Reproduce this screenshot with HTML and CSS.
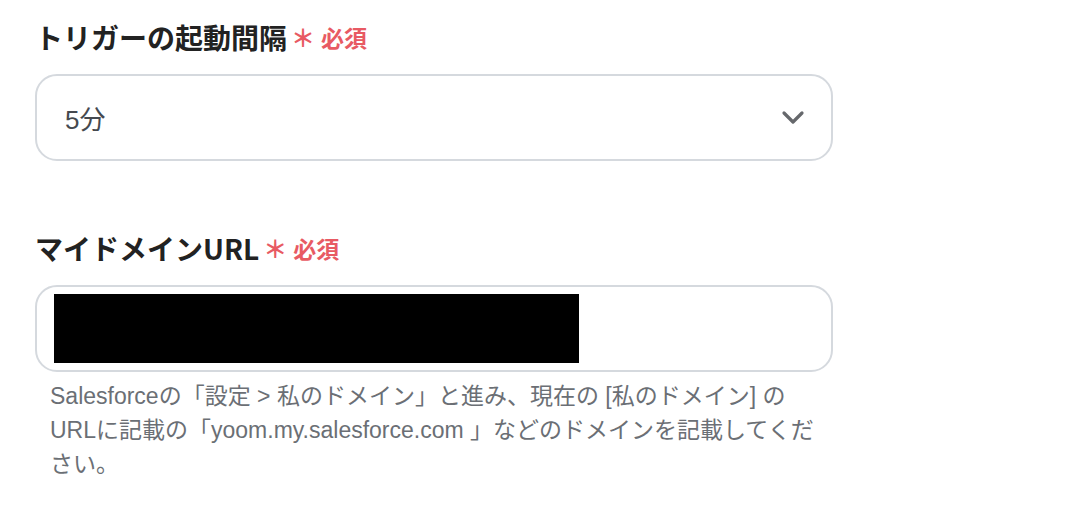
FILE: index.html
```html
<!DOCTYPE html>
<html lang="ja">
<head>
<meta charset="utf-8">
<link rel="stylesheet" href="styles.css">
</head>
<body>
<div class="form">
  <div class="field">
    <div class="label">トリガーの起動間隔<span class="req"><span class="ast">＊</span>必須</span></div>
    <div class="select">
      <span class="value">5分</span>
      <svg class="chev" width="24" height="16" viewBox="0 0 24 16"><path d="M3 3 L12 12 L21 3" fill="none" stroke="#66686c" stroke-width="3.2" stroke-linecap="round" stroke-linejoin="round"/></svg>
    </div>
  </div>
  <div class="field second">
    <div class="label">マイドメインURL<span class="req"><span class="ast">＊</span>必須</span></div>
    <div class="input"><div class="redact"></div></div>
    <p class="help">Salesforceの「設定 &gt; 私のドメイン」と進み、現在の [私のドメイン] のURLに記載の「yoom.my.salesforce.com 」などのドメインを記載してください。</p>
  </div>
</div>
</body>
</html>
```
FILE: styles.css
```css
* { box-sizing: border-box; }
html, body { margin: 0; padding: 0; background: #fff; }
body { font-family: "Liberation Sans", "Noto Sans CJK JP", sans-serif; }
.form { padding: 20px 0 0 35px; width: 833px; }
.label {
  font-family: "Noto Sans CJK JP", sans-serif;
  font-weight: 700;
  font-size: 28px;
  line-height: 34px;
  color: #222;
  display: flex;
  align-items: center;
}
.req {
  color: #e85a63;
  font-size: 23px;
  font-weight: 700;
  margin-left: 4px;
  display: flex;
  align-items: center;
}
.ast { font-size: 24px; margin-right: 6px; }
.select, .input {
  margin-top: 20px;
  height: 87px;
  border: 2px solid #d5d9de;
  border-radius: 22px;
  display: flex;
  align-items: center;
}
.select { padding: 0 26px 0 28px; justify-content: space-between; }
.value { font-size: 26px; color: #45494f; }
.second { margin-top: 70px; }
.input { padding: 0 0 0 17px; }
.redact { width: 525px; height: 69px; background: #000; }
.help {
  margin: 7px 0 0 15px;
  width: 780px;
  font-size: 23px;
  line-height: 34px;
  color: #6b6f75;
}
```
